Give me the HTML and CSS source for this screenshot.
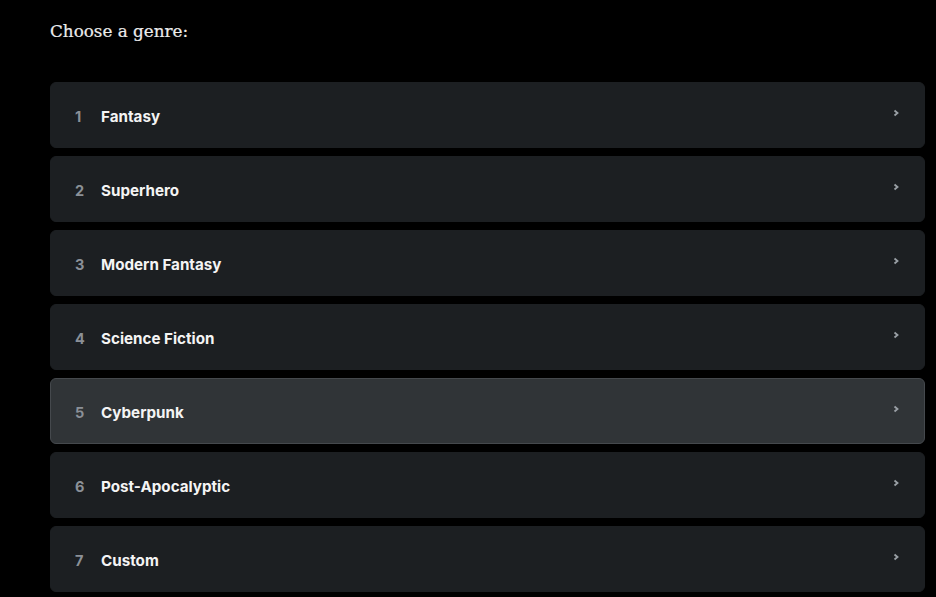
FILE: index.html
```html
<!DOCTYPE html>
<html>
<head>
<meta charset="utf-8">
<link rel="stylesheet" href="styles.css">
</head>
<body>
<div class="page">
  <h1 class="title">Choose a genre:</h1>
  <div class="list">
    <div class="item"><span class="num">1</span><span class="label">Fantasy</span><svg class="chev" viewBox="0 0 8 8"><path d="M2.5 1.5 L5.5 4 L2.5 6.5" /></svg></div>
    <div class="item"><span class="num">2</span><span class="label">Superhero</span><svg class="chev" viewBox="0 0 8 8"><path d="M2.5 1.5 L5.5 4 L2.5 6.5" /></svg></div>
    <div class="item"><span class="num">3</span><span class="label">Modern Fantasy</span><svg class="chev" viewBox="0 0 8 8"><path d="M2.5 1.5 L5.5 4 L2.5 6.5" /></svg></div>
    <div class="item"><span class="num">4</span><span class="label">Science Fiction</span><svg class="chev" viewBox="0 0 8 8"><path d="M2.5 1.5 L5.5 4 L2.5 6.5" /></svg></div>
    <div class="item active"><span class="num">5</span><span class="label">Cyberpunk</span><svg class="chev" viewBox="0 0 8 8"><path d="M2.5 1.5 L5.5 4 L2.5 6.5" /></svg></div>
    <div class="item"><span class="num">6</span><span class="label">Post-Apocalyptic</span><svg class="chev" viewBox="0 0 8 8"><path d="M2.5 1.5 L5.5 4 L2.5 6.5" /></svg></div>
    <div class="item"><span class="num">7</span><span class="label">Custom</span><svg class="chev" viewBox="0 0 8 8"><path d="M2.5 1.5 L5.5 4 L2.5 6.5" /></svg></div>
  </div>
</div>
</body>
</html>
```
FILE: styles.css
```css
html, body {
  margin: 0;
  padding: 0;
  background: #000;
}
.page {
  padding: 19px 11px 0 50px;
}
.title {
  margin: 0;
  font-family: "DejaVu Serif", serif;
  font-weight: normal;
  font-size: 16.8px;
  line-height: 24px;
  color: #ececec;
  -webkit-text-stroke: 0.2px #ececec;
}
.list {
  margin-top: 39px;
  display: flex;
  flex-direction: column;
  gap: 8px;
}
.item {
  box-sizing: border-box;
  height: 66px;
  border: 1px solid #1c1f22;
  background: #1c1f22;
  border-radius: 6px;
  display: flex;
  align-items: center;
  padding: 3px 24px 0 24px;
  font-family: Inter, "Noto Sans", sans-serif;
  font-size: 15.2px;
}
.item.active {
  background: #303437;
  border-color: #45494d;
}
.num {
  width: 26px;
  color: #8b9097;
  font-weight: 700;
  font-size: 14.5px;
}
.label {
  flex: 1;
  color: #f4f4f4;
  font-weight: 700;
}
.chev {
  width: 8px;
  height: 8px;
  margin-top: -7px;
  fill: none;
  stroke: #9aa0a6;
  stroke-width: 1.8;
}
```
